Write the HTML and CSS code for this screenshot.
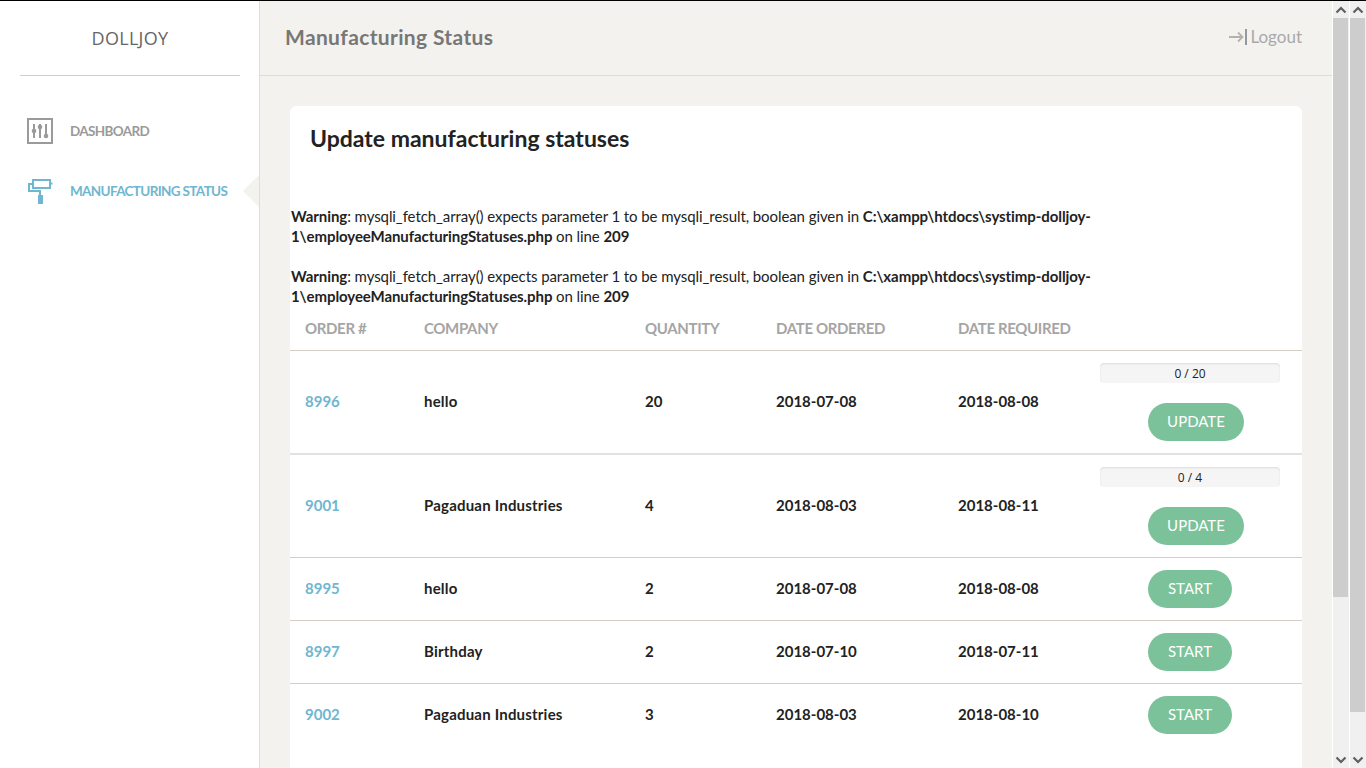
FILE: index.html
```html
<!DOCTYPE html>
<html lang="en">
<head>
<meta charset="utf-8">
<title>Manufacturing Status</title>
<link rel="stylesheet" href="styles.css">
</head>
<body>
<div class="app">
  <aside class="sidebar">
    <div class="brand"><span>DOLLJOY</span></div>
    <nav class="nav">
      <a class="nav-item">
        <svg class="nav-icon" width="26" height="26" viewBox="0 0 26 26" fill="none" stroke="#9a9a9a">
          <rect x="1" y="1" width="24" height="24" stroke-width="2"/>
          <path d="M7 6v14M13 6v14M19 6v14" stroke-width="2"/>
          <circle cx="7" cy="13" r="2.300" fill="#9a9a9a" stroke="none"/>
          <circle cx="13" cy="9" r="2.300" fill="#9a9a9a" stroke="none"/>
          <circle cx="19" cy="18" r="2.300" fill="#9a9a9a" stroke="none"/>
        </svg>
        <span>DASHBOARD</span>
      </a>
      <a class="nav-item active">
        <svg class="nav-icon" width="26" height="26" viewBox="0 0 26 26" fill="none" stroke="#6fb6d0">
          <rect x="6" y="2" width="17" height="8" stroke-width="2"/>
          <path d="M6 6H2V13H13V17" stroke-width="2"/>
          <path d="M23 5.500h2.500" stroke-width="2"/>
          <rect x="11" y="17" width="5" height="9" fill="#6fb6d0" stroke="none"/>
        </svg>
        <span>MANUFACTURING STATUS</span>
      </a>
    </nav>
  </aside>
  <div class="main">
    <header class="topbar">
      <h1>Manufacturing Status</h1>
      <a class="logout">
        <svg width="18" height="16" viewBox="0 0 18 16" fill="none" stroke="#b5b2ab" stroke-width="1.800"><path d="M0 8h13M9 3.500 13.500 8 9 12.500"/><path d="M17 0v16" stroke="#8f9aa3" stroke-width="2"/></svg>
        <span>Logout</span>
      </a>
    </header>
    <div class="content">
      <section class="card">
        <h2>Update manufacturing statuses</h2>
        <div class="warnings">
          <p><b>Warning</b>: mysqli_fetch_array() expects parameter 1 to be mysqli_result, boolean given in <b>C:\xampp\htdocs\systimp-dolljoy-<br>1\employeeManufacturingStatuses.php</b> on line <b>209</b></p>
          <p><b>Warning</b>: mysqli_fetch_array() expects parameter 1 to be mysqli_result, boolean given in <b>C:\xampp\htdocs\systimp-dolljoy-<br>1\employeeManufacturingStatuses.php</b> on line <b>209</b></p>
        </div>
        <table class="orders">
          <colgroup>
            <col class="c-order"><col class="c-company"><col class="c-qty"><col class="c-ordered"><col class="c-required"><col class="c-action">
          </colgroup>
          <thead>
            <tr><th>ORDER #</th><th>COMPANY</th><th>QUANTITY</th><th>DATE ORDERED</th><th>DATE REQUIRED</th><th></th></tr>
          </thead>
          <tbody>
            <tr class="tall thick">
              <td><a class="order-link">8996</a></td><td class="company">hello</td><td>20</td><td>2018-07-08</td><td>2018-08-08</td>
              <td class="action"><div class="progress">0 / 20</div><div class="btn-row"><a class="btn">UPDATE</a></div></td>
            </tr>
            <tr class="tall">
              <td><a class="order-link">9001</a></td><td class="company">Pagaduan Industries</td><td>4</td><td>2018-08-03</td><td>2018-08-11</td>
              <td class="action"><div class="progress">0 / 4</div><div class="btn-row"><a class="btn">UPDATE</a></div></td>
            </tr>
            <tr>
              <td><a class="order-link">8995</a></td><td class="company">hello</td><td>2</td><td>2018-07-08</td><td>2018-08-08</td>
              <td class="action"><div class="btn-row"><a class="btn start">START</a></div></td>
            </tr>
            <tr>
              <td><a class="order-link">8997</a></td><td class="company">Birthday</td><td>2</td><td>2018-07-10</td><td>2018-07-11</td>
              <td class="action"><div class="btn-row"><a class="btn start">START</a></div></td>
            </tr>
            <tr class="last">
              <td><a class="order-link">9002</a></td><td class="company">Pagaduan Industries</td><td>3</td><td>2018-08-03</td><td>2018-08-10</td>
              <td class="action"><div class="btn-row"><a class="btn start">START</a></div></td>
            </tr>
          </tbody>
        </table>
      </section>
    </div>
  </div>
  <div class="scrollbar">
    <div class="arrow"><svg width="12" height="8" viewBox="0 0 12 8" fill="none" stroke="#5f5f5f" stroke-width="2.200"><path d="M1.500 6.500 6 2l4.500 4.500"/></svg></div>
    <div class="track"><div class="thumb thumb-a"></div></div>
    <div class="arrow"><svg width="12" height="8" viewBox="0 0 12 8" fill="none" stroke="#5f5f5f" stroke-width="2.200"><path d="M1.500 1.500 6 6l4.500-4.500"/></svg></div>
  </div>
  <div class="scrollbar">
    <div class="arrow"><svg width="12" height="8" viewBox="0 0 12 8" fill="none" stroke="#5f5f5f" stroke-width="2.200"><path d="M1.500 6.500 6 2l4.500 4.500"/></svg></div>
    <div class="track"><div class="thumb thumb-b"></div></div>
    <div class="arrow"><svg width="12" height="8" viewBox="0 0 12 8" fill="none" stroke="#5f5f5f" stroke-width="2.200"><path d="M1.500 1.500 6 6l4.500-4.500"/></svg></div>
  </div>
</div>
</body>
</html>
```
FILE: styles.css
```css
* { box-sizing: border-box; }
html, body { margin: 0; height: 100%; overflow: hidden; }
body { background: #f3f2ee; color: #222; font-family: "Lato", "Open Sans", sans-serif; font-size: 15px; line-height: 20px; }
.app { display: flex; height: 768px; border-top: 1px solid #000; }

.sidebar { width: 260px; flex: none; background: #fff; border-right: 1px solid #dddddd; padding: 0 19px 0 20px; }
.brand { height: 75px; border-bottom: 1px solid #cfcfcf; display: flex; justify-content: center; align-items: center; color: #666; font-size: 18px; letter-spacing: .3px; font-family: "Open Sans", sans-serif; }
.nav { padding-top: 42px; display: flex; flex-direction: column; gap: 34px; }
.nav-item { position: relative; display: flex; align-items: center; gap: 17px; height: 26px; padding-left: 7px; font-size: 13.500px; letter-spacing: -.65px; white-space: nowrap; font-weight: 700; color: #9a9a9a; }
.nav-icon { flex: none; }
.nav-item.active { color: #6fb6d0; }
.nav-item.active::after { content: ""; position: absolute; right: -19px; top: -3px; border: 16px solid transparent; border-left: 0; border-right-color: #f3f2ee; border-right-width: 16px; }

.main { flex: 1; min-width: 0; display: flex; flex-direction: column; }
.topbar { height: 75px; flex: none; border-bottom: 1px solid #dedcd7; display: flex; align-items: center; justify-content: space-between; padding: 0 30px 2px 25px; }
.topbar h1 { margin: 0; font-size: 21px; letter-spacing: .35px; font-weight: 700; color: #777; }
.logout { display: flex; align-items: center; gap: 3px; color: #a9a9a9; font-size: 17px; }

.content { padding: 30px 30px 0 30px; }
.card { background: #fff; border-radius: 6px 6px 0 0; height: 680px; }
.card h2 { margin: 0; padding: 18px 20px 0; font-size: 23px; line-height: 28px; font-weight: 700; color: #222; }
.warnings { padding: 54px 0 0 1px; letter-spacing: -.08px; white-space: nowrap; }
.warnings p { margin: 0 0 20px; }
.warnings p:last-child { margin-bottom: 0; }

.orders { width: 100%; table-layout: fixed; border-collapse: collapse; margin-top: 11px; }
.c-order { width: 119px; }
.c-company { width: 221px; }
.c-qty { width: 131px; }
.c-ordered { width: 182px; }
.c-required { width: 142px; }
.orders th { text-align: left; padding: 1px 15px 0; height: 33px; vertical-align: top; white-space: nowrap; letter-spacing: -.35px; font-weight: 700; color: #a5a5a5; border-bottom: 1px solid #d3cfc4; }
.orders td { padding: 10px 15px 12px; font-weight: 700; color: #222; vertical-align: middle; border-bottom: 1px solid #d3cfc4; }
.orders td.company { letter-spacing: .2px; }
.orders tr.thick td { border-bottom: 2px solid #e2e2e2; }
.orders tr.last td { border-bottom: 0; }
.order-link { color: #6fb6d0; }
.orders td.action { padding: 12px 22px 12px 15px; }
.progress { height: 20px; width: 180px; background: #f5f5f5; border-radius: 4px; box-shadow: inset 0 1px 2px rgba(0,0,0,.1); text-align: center; font-family: "Open Sans", sans-serif; font-weight: 400; font-size: 12px; line-height: 22px; color: #222; margin-bottom: 20px; }
.btn-row { padding-left: 48px; }
.btn { display: inline-block; vertical-align: top; height: 38px; width: 96px; border-radius: 19px; background: #7bc29a; color: #fff; font-weight: 400; text-align: center; line-height: 36px; }
.btn.start { width: 84px; }

.scrollbar { width: 17px; flex: none; border-left: 1px solid #fff; background: #f0f0f0; display: flex; flex-direction: column; }
.arrow { height: 17px; flex: none; display: flex; align-items: center; justify-content: center; }
.track { flex: 1; display: flex; flex-direction: column; }
.thumb { background: #cdcdcd; margin-right: 1px; }
.thumb-a { height: 579px; }
.thumb-b { height: 694px; }
```
